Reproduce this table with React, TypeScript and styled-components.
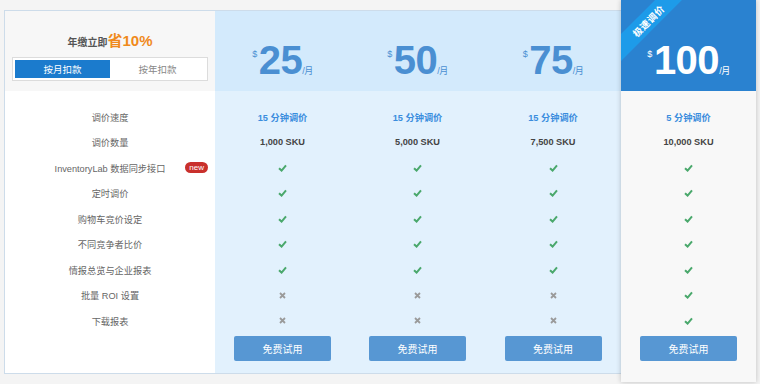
import styled, { createGlobalStyle } from 'styled-components';

const GlobalStyle = createGlobalStyle`
  body {
    margin: 0;
    background: #f4f4f4;
    font-family: "Liberation Sans", "Noto Sans CJK SC", sans-serif;
  }
`;

const Page = styled.div`
  padding: 10px 4px 0 4px;
  width: 760px;
  height: 384px;
  box-sizing: border-box;
`;

const Table = styled.div`
  display: flex;
  border: 1px solid #cddcea;
  border-right: none;
  width: 752px;
  box-sizing: border-box;
`;

const Column = styled.div<{ $width: number }>`
  width: ${(p) => p.$width}px;
  display: flex;
  flex-direction: column;
  flex-shrink: 0;
`;

const FeaturedColumn = styled(Column)`
  margin: -11px 0 -9px 0;
  background: #f8f8f8;
  box-shadow: 0 0 5px rgba(0, 0, 0, 0.22);
  position: relative;
  z-index: 2;
  overflow: hidden;
`;

const Head = styled.div<{ $bg: string; $height: number }>`
  height: ${(p) => p.$height}px;
  background: ${(p) => p.$bg};
  display: flex;
  align-items: flex-end;
  justify-content: center;
  padding-bottom: 11px;
  box-sizing: border-box;
  position: relative;
`;

const LabelHead = styled.div`
  height: 80px;
  background: #f7f7f7;
  display: flex;
  flex-direction: column;
  align-items: center;
  padding-top: 21px;
  box-sizing: border-box;
`;

const Promo = styled.div`
  font-size: 10px;
  font-weight: bold;
  color: #555;
  line-height: 18px;
  span {
    color: #f08a1c;
    font-size: 15px;
  }
`;

const Toggle = styled.div`
  margin-top: 5px;
  width: 196px;
  height: 24px;
  border: 1px solid #dcdcdc;
  background: #fff;
  padding: 2px;
  box-sizing: border-box;
  display: flex;
`;

const ToggleOption = styled.div<{ $active?: boolean }>`
  flex: 1;
  display: flex;
  align-items: center;
  justify-content: center;
  font-size: 9.5px;
  background: ${(p) => (p.$active ? '#1b7bcd' : '#fff')};
  color: ${(p) => (p.$active ? '#fff' : '#888')};
`;

const Price = styled.div<{ $color: string }>`
  color: ${(p) => p.$color};
  font-weight: bold;
  font-size: 40px;
  line-height: 1;
  letter-spacing: -0.5px;
`;

const Dollar = styled.span`
  font-size: 9px;
  font-weight: normal;
  vertical-align: 17px;
  margin-right: 2px;
`;

const PerMonth = styled.span`
  font-size: 9px;
  font-weight: normal;
`;

const Ribbon = styled.div`
  position: absolute;
  left: -35px;
  top: 11px;
  width: 124px;
  height: 19px;
  background: #1d9be9;
  color: #fff;
  font-size: 9.5px;
  font-weight: bold;
  display: flex;
  align-items: center;
  justify-content: center;
  letter-spacing: 0.5px;
  transform: rotate(-45deg);
`;

const Body = styled.div<{ $bg: string }>`
  flex: 1;
  background: ${(p) => p.$bg};
  padding: 13px 0 12px;
  display: flex;
  flex-direction: column;
  align-items: center;
`;

const Row = styled.div`
  height: 25.5px;
  width: 100%;
  display: flex;
  align-items: center;
  justify-content: center;
  position: relative;
  font-size: 9.2px;
  color: #666;
`;

const Speed = styled.span`
  color: #3a8ddd;
  font-weight: bold;
`;

const Sku = styled.span`
  color: #444;
  font-weight: bold;
`;

const NewBadge = styled.span`
  position: absolute;
  right: 7px;
  top: 7px;
  height: 11px;
  padding: 0 4px;
  border-radius: 6px;
  background: #c9302c;
  color: #fff;
  font-size: 8px;
  line-height: 11px;
`;

const TryButton = styled.button`
  margin-top: 2.5px;
  width: 97px;
  height: 25px;
  border: none;
  border-radius: 2px;
  background: #5797d3;
  color: #fff;
  font-family: inherit;
  font-size: 10px;
  padding: 0;
`;

const Check = () => (
  <svg width="9" height="8" viewBox="0 0 9 8">
    <path d="M1 4.2 L3.6 6.6 L8 1.4" fill="none" stroke="#4aa86c" strokeWidth="2" />
  </svg>
);

const Cross = () => (
  <svg width="7" height="7" viewBox="0 0 7 7">
    <path d="M1 1 L6 6 M6 1 L1 6" fill="none" stroke="#9a9a9a" strokeWidth="1.8" />
  </svg>
);

const labels = [
  '调价速度',
  '调价数量',
  'InventoryLab 数据同步接口',
  '定时调价',
  '购物车竞价设定',
  '不同竞争者比价',
  '情报总览与企业报表',
  '批量 ROI 设置',
  '下载报表',
];

interface Plan {
  price: number;
  speed: string;
  sku: string;
  features: boolean[];
}

const basic = [true, true, true, true, true, false, false];

const plans: Plan[] = [
  { price: 25, speed: '15 分钟调价', sku: '1,000 SKU', features: basic },
  { price: 50, speed: '15 分钟调价', sku: '5,000 SKU', features: basic },
  { price: 75, speed: '15 分钟调价', sku: '7,500 SKU', features: basic },
];

const featured: Plan = {
  price: 100,
  speed: '5 分钟调价',
  sku: '10,000 SKU',
  features: [true, true, true, true, true, true, true],
};

function PlanRows({ plan }: { plan: Plan }) {
  return (
    <>
      <Row>
        <Speed>{plan.speed}</Speed>
      </Row>
      <Row>
        <Sku>{plan.sku}</Sku>
      </Row>
      {plan.features.map((ok, i) => (
        <Row key={i}>{ok ? <Check /> : <Cross />}</Row>
      ))}
      <TryButton>免费试用</TryButton>
    </>
  );
}

export default function App() {
  return (
    <Page>
      <GlobalStyle />
      <Table>
        <Column $width={210}>
          <LabelHead>
            <Promo>
              年缴立即<span>省10%</span>
            </Promo>
            <Toggle>
              <ToggleOption $active>按月扣款</ToggleOption>
              <ToggleOption>按年扣款</ToggleOption>
            </Toggle>
          </LabelHead>
          <Body $bg="#fff">
            {labels.map((l, i) => (
              <Row key={l}>
                {l}
                {i === 2 && <NewBadge>new</NewBadge>}
              </Row>
            ))}
          </Body>
        </Column>
        {plans.map((p, i) => (
          <Column key={p.price} $width={i === 2 ? 136 : 135}>
            <Head $bg="#d3eafc" $height={80}>
              <Price $color="#4a8fd2">
                <Dollar>$</Dollar>
                {p.price}
                <PerMonth>/月</PerMonth>
              </Price>
            </Head>
            <Body $bg="#e2f1fd">
              <PlanRows plan={p} />
            </Body>
          </Column>
        ))}
        <FeaturedColumn $width={135}>
          <Head $bg="#2a82d0" $height={91}>
            <Ribbon>极速调价</Ribbon>
            <Price $color="#fff">
              <Dollar>$</Dollar>
              {featured.price}
              <PerMonth>/月</PerMonth>
            </Price>
          </Head>
          <Body $bg="#f8f8f8">
            <PlanRows plan={featured} />
          </Body>
        </FeaturedColumn>
      </Table>
    </Page>
  );
}
